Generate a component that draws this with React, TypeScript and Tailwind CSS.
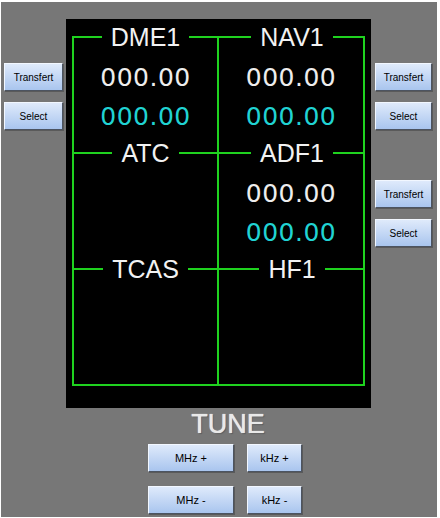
import React from 'react';

const green = 'border-[#1fd21f]';

function Btn({ label, className }: { label: string; className: string }) {
  return (
    <button
      className={
        "h-[28px] border border-t-[#f2f7ff] border-l-[#f2f7ff] border-b-[#4c5461] border-r-[#4c5461] bg-linear-to-b from-[#dfeafb] to-[#a9c5ee] text-black font-['Liberation_Sans',Arial,sans-serif] shadow-[1px_1px_0_#5a5a5a] " +
        className
      }
    >
      {label}
    </button>
  );
}

function Cell({
  title,
  left,
  last,
  values,
}: {
  title: string;
  left?: boolean;
  last?: boolean;
  values?: boolean;
}) {
  return (
    <div
      className={
        'flex flex-col border-r-2 ' +
        green +
        (left ? ' border-l-2' : '') +
        (last ? ' h-[118px] border-b-2' : ' h-[116px]')
      }
    >
      <div className={'-mt-[12px] h-[26px] flex items-center ' + (left ? '-mx-[2px]' : '-mr-[2px]')}>
        <div className="flex-1 h-[2px] bg-[#1fd21f]" />
        <span className="px-[9px] text-[25px] leading-none text-[#f2f2f2] font-['Liberation_Sans',Arial,sans-serif]">
          {title}
        </span>
        <div className="flex-1 h-[2px] bg-[#1fd21f]" />
      </div>
      {values && (
        <div className="mt-[13px] flex flex-col gap-[9px] text-center text-[25px] leading-[30px] tracking-[0.5px] font-['DejaVu_Sans',Verdana,sans-serif]">
          <div className="text-[#ededed]">000.00</div>
          <div className="text-[#20d3d3]">000.00</div>
        </div>
      )}
    </div>
  );
}

export default function App() {
  return (
    <div className="w-[440px] h-[518px] bg-white pt-[2px] pl-[1px]">
      <div className="w-[436px] h-[515px] bg-[#777777] pt-[17px] flex flex-col">
        <div className="flex">
          <div className="w-[65px] pl-[3px] pt-[44px] flex flex-col gap-[11px]">
            <Btn label="Transfert" className="w-[59px] text-[10px]" />
            <Btn label="Select" className="w-[59px] text-[10px]" />
          </div>
          <div className="w-[305px] h-[389px] bg-black pt-[17px] pl-[6px]">
            <div className="flex">
              <div className="w-[147px] flex flex-col">
                <Cell title="DME1" left values />
                <Cell title="ATC" left />
                <Cell title="TCAS" left last />
              </div>
              <div className="w-[146px] flex flex-col">
                <Cell title="NAV1" values />
                <Cell title="ADF1" values />
                <Cell title="HF1" last />
              </div>
            </div>
          </div>
          <div className="pl-[4px] pt-[44px] flex flex-col">
            <Btn label="Transfert" className="w-[57px] text-[10px]" />
            <Btn label="Select" className="w-[57px] text-[10px] mt-[11px]" />
            <Btn label="Transfert" className="w-[57px] text-[10px] mt-[50px]" />
            <Btn label="Select" className="w-[57px] text-[10px] mt-[11px]" />
          </div>
        </div>
        <div className="pl-[18px] mt-[2px] flex justify-center">
          <span className="text-[27px] leading-[28px] text-[#e9e9e9] font-['Liberation_Sans',Arial,sans-serif] [text-shadow:0_0_1px_#ffffff,1px_1px_1px_#555555]">
            TUNE
          </span>
        </div>
        <div className="pl-[12px] mt-[6px] flex flex-col items-center gap-[14px]">
          <div className="flex gap-[13px]">
            <Btn label="MHz +" className="w-[86px] h-[27px] text-[11px]" />
            <Btn label="kHz +" className="w-[55px] h-[27px] text-[11px]" />
          </div>
          <div className="flex gap-[13px]">
            <Btn label="MHz -" className="w-[86px] h-[27px] text-[11px]" />
            <Btn label="kHz -" className="w-[55px] h-[27px] text-[11px]" />
          </div>
        </div>
      </div>
    </div>
  );
}
